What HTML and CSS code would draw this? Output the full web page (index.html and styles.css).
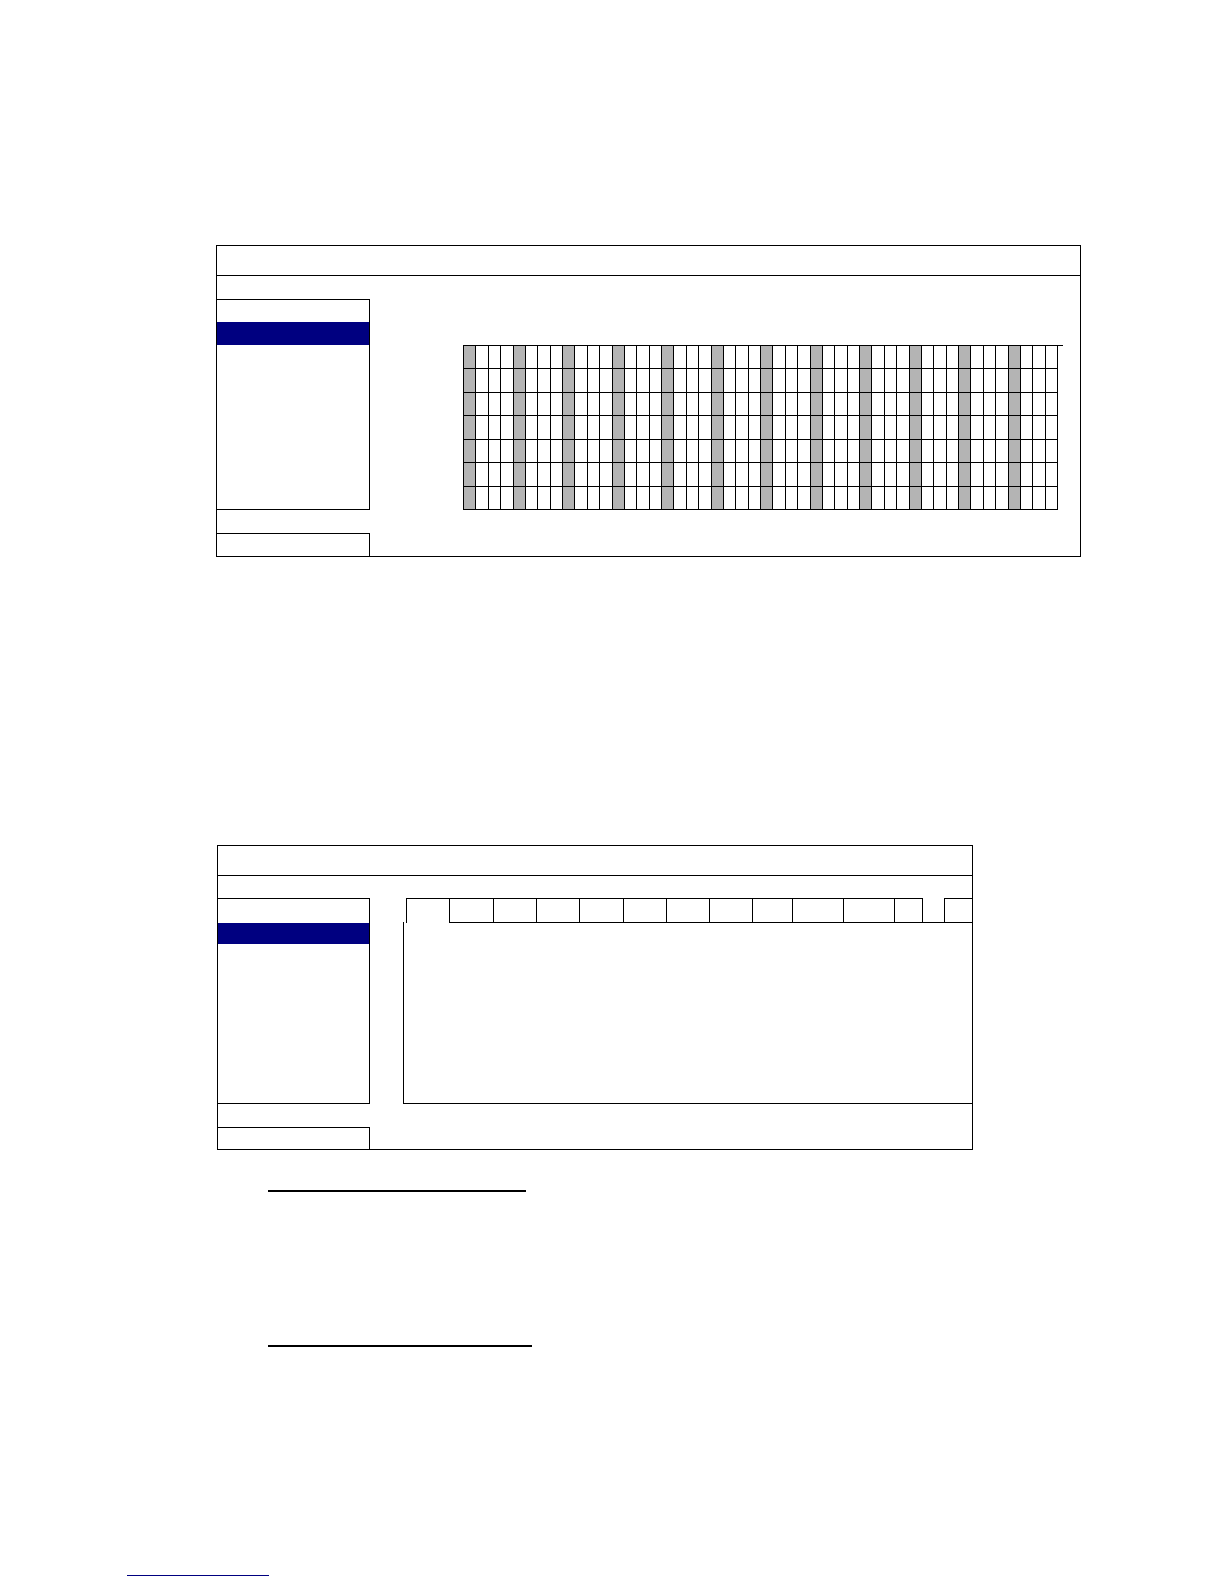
FILE: index.html
```html
<!DOCTYPE html>
<html lang="en">
<head>
<meta charset="utf-8">
<title>Schedule and record setup screens</title>
<link rel="stylesheet" href="styles.css">
</head>
<body>
<div class="page">

  <section class="win win-1">
    <div class="win-head"></div>
    <div class="win-body">
      <div class="side">
        <div class="panel">
          <div class="row"></div>
          <div class="row sel"></div>
        </div>
        <div class="foot"></div>
      </div>
      <div class="main main-1">
        <svg class="sched" width="600" height="166" viewBox="0 0 600 166" shape-rendering="crispEdges" aria-hidden="true">
          <g fill="#b4b4b4">
            <rect x="0" y="0" width="12" height="165"/>
            <rect x="50" y="0" width="12" height="165"/>
            <rect x="99" y="0" width="12" height="165"/>
            <rect x="149" y="0" width="12" height="165"/>
            <rect x="198" y="0" width="12" height="165"/>
            <rect x="248" y="0" width="12" height="165"/>
            <rect x="297" y="0" width="12" height="165"/>
            <rect x="347" y="0" width="12" height="165"/>
            <rect x="396" y="0" width="12" height="165"/>
            <rect x="446" y="0" width="12" height="165"/>
            <rect x="495" y="0" width="12" height="165"/>
            <rect x="545" y="0" width="12" height="165"/>
          </g>
          <path fill="none" stroke="#000" stroke-width="1" d="M0.5 0V165M12.5 0V165M25.5 0V165M37.5 0V165M50.5 0V165M62.5 0V165M74.5 0V165M87.5 0V165M99.5 0V165M111.5 0V165M124.5 0V165M136.5 0V165M149.5 0V165M161.5 0V165M173.5 0V165M186.5 0V165M198.5 0V165M210.5 0V165M223.5 0V165M235.5 0V165M248.5 0V165M260.5 0V165M272.5 0V165M285.5 0V165M297.5 0V165M309.5 0V165M322.5 0V165M334.5 0V165M347.5 0V165M359.5 0V165M371.5 0V165M384.5 0V165M396.5 0V165M408.5 0V165M421.5 0V165M433.5 0V165M446.5 0V165M458.5 0V165M470.5 0V165M483.5 0V165M495.5 0V165M507.5 0V165M520.5 0V165M532.5 0V165M545.5 0V165M557.5 0V165M569.5 0V165M582.5 0V165M594.5 0V165"/>
          <path fill="none" stroke="#000" stroke-width="1" d="M0 0.5H600M0 23.5H595M0 47.5H595M0 70.5H595M0 94.5H595M0 117.5H595M0 141.5H595M0 164.5H595"/>
        </svg>
      </div>
    </div>
  </section>

  <section class="win win-2">
    <div class="win-head"></div>
    <div class="win-body">
      <div class="side">
        <div class="panel">
          <div class="row"></div>
          <div class="row sel"></div>
        </div>
        <div class="foot"></div>
      </div>
      <div class="main main-2">
        <div class="tabs">
          <div class="tab active w43"></div>
          <div class="tab w44"></div>
          <div class="tab w43"></div>
          <div class="tab w43"></div>
          <div class="tab w44"></div>
          <div class="tab w43"></div>
          <div class="tab w43"></div>
          <div class="tab w43"></div>
          <div class="tab w40"></div>
          <div class="tab w51"></div>
          <div class="tab w51"></div>
          <div class="tab w28"></div>
          <div class="tab-gap"></div>
          <div class="tab last w28"></div>
        </div>
        <div class="pane"></div>
      </div>
    </div>
  </section>

  <div class="notes">
    <div class="rule rule-1"></div>
    <div class="rule rule-2"></div>
  </div>
  <div class="link-line"></div>

</div>
</body>
</html>
```

FILE: styles.css
```css
* {
  box-sizing: border-box;
}

html,
body {
  margin: 0;
  padding: 0;
  background: #ffffff;
}

body {
  font-family: "Liberation Sans", Arial, sans-serif;
  width: 1224px;
  min-height: 1584px;
}

.page {
  padding-top: 245px;
}

/* ---------- window frames ---------- */
.win {
  border: 1px solid #000;
  display: flex;
  flex-direction: column;
}

.win-head {
  flex: none;
  height: 30px;
  border-bottom: 1px solid #000;
}

.win-body {
  flex: 1;
  display: flex;
}

.side {
  flex: none;
  display: flex;
  flex-direction: column;
}

.panel {
  border-top: 1px solid #000;
  border-right: 1px solid #000;
  border-bottom: 1px solid #000;
  display: flex;
  flex-direction: column;
}

.row.sel {
  background: #000080;
}

.foot {
  border-top: 1px solid #000;
  border-right: 1px solid #000;
}

.main {
  flex: 1;
  display: flex;
  flex-direction: column;
}

/* ---------- figure 1 ---------- */
.win-1 {
  margin-left: 216px;
  width: 865px;
  height: 312px;
}

.win-1 .side {
  width: 153px;
}

.win-1 .panel {
  margin-top: 23px;
  height: 211px;
}

.win-1 .row {
  height: 22px;
}

.win-1 .row.sel {
  height: 23px;
}

.win-1 .foot {
  margin-top: 23px;
  height: 23px;
}

.main-1 {
  padding-left: 93px;
  padding-top: 69px;
}

.sched {
  display: block;
}

/* ---------- figure 2 ---------- */
.win-2 {
  margin-top: 288px;
  margin-left: 217px;
  width: 756px;
  height: 305px;
}

.win-2 .side {
  width: 152px;
}

.win-2 .panel {
  margin-top: 22px;
  height: 206px;
}

.win-2 .row {
  height: 24px;
}

.win-2 .row.sel {
  height: 21px;
}

.win-2 .foot {
  margin-top: 23px;
  height: 22px;
}

.main-2 {
  padding-top: 22px;
}

.tabs {
  display: flex;
  height: 25px;
  margin-left: 36px;
}

.tab {
  flex: none;
  height: 25px;
  border-top: 1px solid #000;
  border-left: 1px solid #000;
  border-bottom: 1px solid #000;
}

.tab.active {
  border-bottom: none;
}

.tab-gap {
  flex: none;
  width: 22px;
  height: 25px;
  border-left: 1px solid #000;
  border-bottom: 1px solid #000;
}

.w28 { width: 28px; }
.w40 { width: 40px; }
.w43 { width: 43px; }
.w44 { width: 44px; }
.w51 { width: 51px; }

.pane {
  margin-top: -1px;
  margin-left: 33px;
  height: 182px;
  border-left: 1px solid #000;
  border-bottom: 1px solid #000;
}

/* ---------- underlined headings below ---------- */
.notes {
  margin-left: 268px;
}

.rule {
  height: 2px;
  background: #000;
}

.rule-1 {
  margin-top: 40px;
  width: 258px;
}

.rule-2 {
  margin-top: 153px;
  width: 264px;
}

.link-line {
  margin-top: 228px;
  margin-left: 127px;
  width: 142px;
  height: 1px;
  background: #000080;
}
```
